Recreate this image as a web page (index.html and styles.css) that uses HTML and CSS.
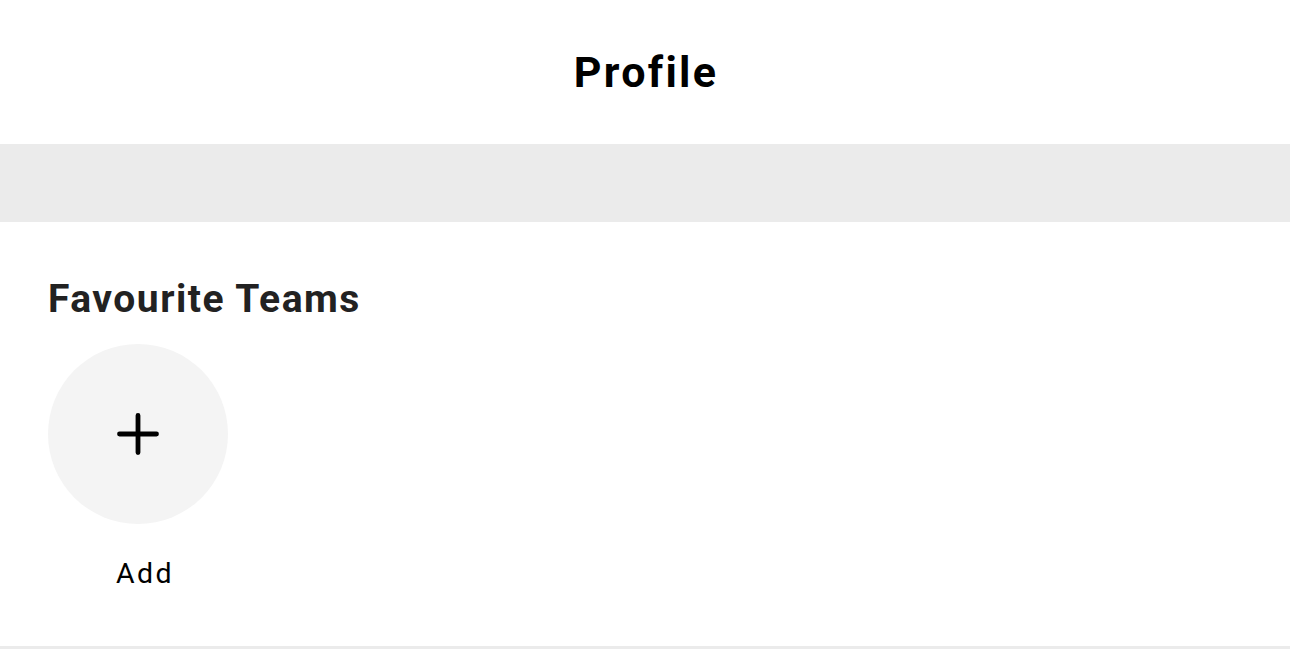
FILE: index.html
```html
<!DOCTYPE html>
<html>
<head>
<meta charset="utf-8">
<link rel="stylesheet" href="styles.css">
</head>
<body>
<header class="topbar"><h1 class="title">Profile</h1></header>
<div class="band"></div>
<section class="teams">
  <h2 class="teams-title">Favourite Teams</h2>
  <div class="team-list">
    <div class="team-item">
      <div class="add-circle">
        <svg width="42" height="42" viewBox="0 0 42 42"><path d="M21 2.5V39.5M2.5 21H39.5" stroke="#000" stroke-width="4.8" stroke-linecap="round" fill="none"/></svg>
      </div>
      <div class="team-label">Add</div>
    </div>
  </div>
</section>
<div class="divider"></div>
</body>
</html>
```
FILE: styles.css
```css
* { box-sizing: border-box; }
html, body { margin: 0; padding: 0; background: #fff; }
body { font-family: Roboto, "Liberation Sans", sans-serif; width: 1290px; height: 658px; overflow: hidden; }
.topbar { height: 144px; display: flex; align-items: center; justify-content: center; }
.title { margin: 0; font-size: 43px; font-weight: 700; color: #000; letter-spacing: 2.3px; padding-left: 2px; line-height: 50px; }
.band { height: 78px; background: #ebebeb; }
.teams { padding: 54px 48px 0; height: 424px; }
.teams-title { margin: 0; font-size: 39px; font-weight: 700; color: #222; line-height: 46px; letter-spacing: 1.5px; }
.team-list { display: flex; margin-top: 22px; }
.team-item { display: flex; flex-direction: column; align-items: center; width: 180px; }
.add-circle { width: 180px; height: 180px; border-radius: 50%; background: #f4f4f4; display: flex; align-items: center; justify-content: center; }
.team-label { margin-top: 32px; font-size: 28.5px; color: #000; line-height: 36px; letter-spacing: 2.5px; padding-left: 14px; }
.divider { height: 3px; background: #ebebeb; }
```
